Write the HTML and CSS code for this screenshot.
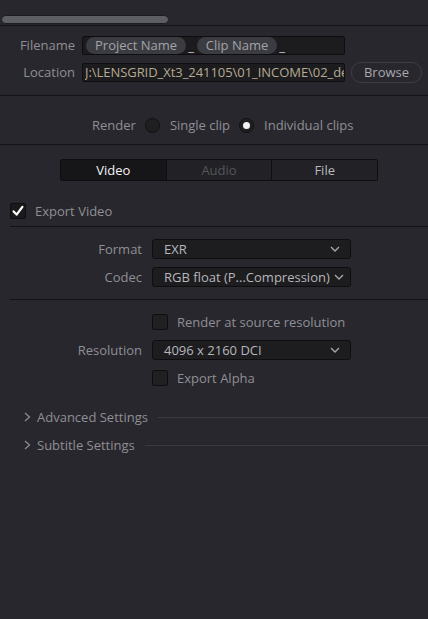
FILE: index.html
```html
<!DOCTYPE html>
<html>
<head>
<meta charset="utf-8">
<link rel="stylesheet" href="styles.css">
</head>
<body>
<div class="panel">
  <div class="scroll-area"><div class="thumb"></div></div>

  <div class="file-section">
    <div class="file-row">
      <span class="flabel">Filename</span>
      <div class="field">
        <span class="chip">Project Name</span><span class="sep">_</span><span class="chip">Clip Name</span><span class="sep">_</span>
      </div>
    </div>
    <div class="file-row">
      <span class="flabel">Location</span>
      <div class="field path"><span class="path-text">J:\LENSGRID_Xt3_241105\01_INCOME\02_de</span></div>
      <button class="browse">Browse</button>
    </div>
  </div>

  <div class="render-section">
    <span class="lbl">Render</span>
    <span class="radio"></span><span class="lbl">Single clip</span>
    <span class="radio on"></span><span class="lbl">Individual clips</span>
  </div>

  <div class="tabs-section">
    <div class="tabs">
      <div class="tab active">Video</div>
      <div class="tab disabled">Audio</div>
      <div class="tab">File</div>
    </div>
  </div>

  <div class="export-row">
    <span class="check checked"><svg viewBox="0 0 14 14" width="14" height="14"><path d="M2.6 7.4 L5.6 10.6 L11.4 2.8" fill="none" stroke="#fff" stroke-width="2.2" stroke-linecap="round" stroke-linejoin="round"/></svg></span>
    <span class="lbl">Export Video</span>
  </div>

  <div class="format-section">
    <div class="frow">
      <span class="rlabel">Format</span>
      <div class="select"><span>EXR</span><svg class="chev" viewBox="0 0 10 6" width="10" height="6"><path d="M1 1 L5 5 L9 1" fill="none" stroke="#a8a8ac" stroke-width="1.3"/></svg></div>
    </div>
    <div class="frow">
      <span class="rlabel">Codec</span>
      <div class="select"><span>RGB float (P...Compression)</span><svg class="chev" viewBox="0 0 10 6" width="10" height="6"><path d="M1 1 L5 5 L9 1" fill="none" stroke="#a8a8ac" stroke-width="1.3"/></svg></div>
    </div>
  </div>

  <div class="res-section">
    <div class="frow">
      <span class="rlabel"></span>
      <div class="crow"><span class="check"></span><span class="lbl">Render at source resolution</span></div>
    </div>
    <div class="frow">
      <span class="rlabel">Resolution</span>
      <div class="select"><span>4096 x 2160 DCI</span><svg class="chev" viewBox="0 0 10 6" width="10" height="6"><path d="M1 1 L5 5 L9 1" fill="none" stroke="#a8a8ac" stroke-width="1.3"/></svg></div>
    </div>
    <div class="frow">
      <span class="rlabel"></span>
      <div class="crow"><span class="check"></span><span class="lbl">Export Alpha</span></div>
    </div>
  </div>

  <div class="collapsibles">
    <div class="coll">
      <svg class="arrow" viewBox="0 0 7 10" width="7" height="10"><path d="M1 1 L5.5 5 L1 9" fill="none" stroke="#8a8a90" stroke-width="1.3"/></svg>
      <span class="lbl">Advanced Settings</span>
      <span class="rule"></span>
    </div>
    <div class="coll">
      <svg class="arrow" viewBox="0 0 7 10" width="7" height="10"><path d="M1 1 L5.5 5 L1 9" fill="none" stroke="#8a8a90" stroke-width="1.3"/></svg>
      <span class="lbl">Subtitle Settings</span>
      <span class="rule"></span>
    </div>
  </div>
</div>
</body>
</html>
```

FILE: styles.css
```css
html, body {
  margin: 0;
  padding: 0;
  background: #28272d;
}
body {
  font-family: "Open Sans", "Noto Sans", sans-serif;
  font-size: 13px;
  color: #8f8f95;
  width: 428px;
  height: 619px;
  overflow: hidden;
}
.panel {
  display: flex;
  flex-direction: column;
}
.scroll-area {
  height: 25px;
  border-bottom: 1px solid #141416;
}
.thumb {
  margin-top: 15px;
  margin-left: 1px;
  width: 166px;
  height: 7px;
  background: #5c5e63;
  border: 1px solid #1c1c1f;
  border-radius: 5px;
}
.file-section {
  display: flex;
  flex-direction: column;
  gap: 8px;
  padding: 10px 0 13px;
  border-bottom: 1px solid #141416;
}
.file-row {
  display: flex;
  align-items: center;
  height: 19px;
}
.flabel {
  width: 75px;
  text-align: right;
  margin-right: 7px;
  line-height: 19px;
}
.field {
  width: 258px;
  height: 17px;
  background: #1c1c1f;
  border: 1px solid #0e0e10;
  border-radius: 2px;
  display: flex;
  align-items: center;
  overflow: hidden;
  white-space: nowrap;
  padding-left: 3px;
}
.chip {
  background: #3b3c41;
  color: #a2a2a8;
  border-radius: 9px;
  height: 17px;
  line-height: 17px;
  padding: 0 9px;
}
.sep {
  color: #c8c8cc;
  padding: 0 3px 0 2px;
}
.path {
  color: #b6aa92;
  line-height: 17px;
  padding-left: 2px;
  width: 259px;
}
.path-text {
  display: block;
  overflow: hidden;
  white-space: nowrap;
  width: 100%;
  letter-spacing: -0.05px;
}
.browse {
  margin-left: 6px;
  width: 71px;
  height: 21px;
  background: #28272d;
  border: 1px solid #3d3d42;
  border-radius: 10px;
  color: #a8a8ae;
  font-family: "Open Sans", "Noto Sans", sans-serif;
  font-size: 13px;
  padding: 0;
  line-height: 19px;
  flex: none;
}
.render-section {
  display: flex;
  align-items: center;
  justify-content: flex-start;
  height: 16px;
  padding: 21px 0 11px 92px;
  border-bottom: 1px solid #141416;
}
.lbl {
  white-space: nowrap;
  line-height: 16px;
}
.radio {
  width: 13px;
  height: 13px;
  border-radius: 50%;
  background: #1f1f22;
  border: 1px solid #111113;
  margin: 0 10px 0 9px;
  position: relative;
  flex: none;
}
.radio.on::after {
  content: "";
  position: absolute;
  left: 3px;
  top: 3px;
  width: 7px;
  height: 7px;
  border-radius: 50%;
  background: #f2f2f2;
}
.tabs-section {
  padding: 14px 0 0 60px;
  display: flex;
}
.tabs {
  display: flex;
  width: 316px;
  height: 20px;
  border: 1px solid #0f0f11;
  border-radius: 2px;
  overflow: hidden;
  background: #222226;
}
.tab {
  flex: 1;
  text-align: center;
  line-height: 20px;
  color: #b8b8bd;
  border-left: 1px solid #0f0f11;
}
.tab:first-child {
  border-left: none;
}
.tab.active {
  background: #161618;
  color: #f2f2f4;
}
.tab.disabled {
  color: #55555b;
}
.export-row {
  display: flex;
  align-items: center;
  padding: 22px 0 7px 0;
  border-bottom: 1px solid #141416;
  margin-left: 10px;
}
.check {
  width: 13px;
  height: 13px;
  background: #202023;
  border: 1px solid #0e0e10;
  border-radius: 2px;
  flex: none;
  display: flex;
  align-items: center;
  justify-content: center;
}
.check.checked {
  background: #1a1a1c;
  width: 14px;
  height: 14px;
}
.check svg {
  display: block;
}
.export-row .lbl {
  margin-left: 9px;
}
.format-section {
  display: flex;
  flex-direction: column;
  gap: 8px;
  padding: 12px 0 12px;
  margin-left: 10px;
  border-bottom: 1px solid #141416;
}
.frow {
  display: flex;
  align-items: center;
  min-height: 20px;
}
.rlabel {
  width: 132px;
  text-align: right;
  margin-right: 10px;
  line-height: 20px;
  flex: none;
}
.select {
  background: #1d1d20;
  border: 1px solid #0e0e10;
  border-radius: 3px;
  display: flex;
  align-items: center;
  justify-content: space-between;
  color: #b6b6bb;
  padding: 0 10px 0 11px;
  box-sizing: border-box;
  width: 199px;
  height: 20px;
  white-space: nowrap;
}
.chev {
  display: block;
  flex: none;
  margin-left: 4px;
}
.res-section {
  display: flex;
  flex-direction: column;
  gap: 10px;
  padding: 14px 0 0;
  margin-left: 10px;
}
.res-section .frow {
  min-height: 16px;
}
.crow {
  display: flex;
  align-items: center;
}
.crow .check {
  width: 14px;
  height: 14px;
}
.crow .lbl {
  margin-left: 9px;
}
.collapsibles {
  display: flex;
  flex-direction: column;
  gap: 12px;
  padding-top: 23px;
}
.coll {
  display: flex;
  align-items: center;
  height: 16px;
  padding-left: 24px;
}
.arrow {
  display: block;
  flex: none;
  margin-right: 6px;
}
.rule {
  flex: 1;
  height: 1px;
  background: #3a3a3f;
  margin-left: 10px;
}
```
